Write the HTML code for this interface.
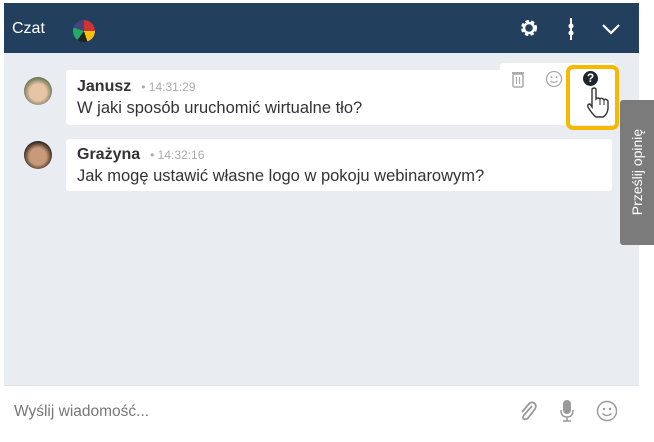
<!DOCTYPE html>
<html><head><meta charset="utf-8"><style>
body{margin:0;width:654px;height:442px;background:#fff;font-family:"Liberation Sans",sans-serif;position:relative;overflow:hidden}
.panel{position:absolute;left:4px;top:3px;width:635px;height:434px;background:#e9ecf1}
.hdr{position:absolute;left:0;top:0;width:635px;height:50px;background:#22405e;color:#fff}
.msg{position:absolute;background:#fff;border-radius:3px}
.name{font-weight:bold;font-size:16px;color:#333}
.time{font-size:12px;color:#aaa;margin-left:10px}
.txt{font-size:16.5px;color:#333;margin-top:3px}
.av{position:absolute;width:28px;height:28px;border-radius:50%}
</style></head><body>
<div class="panel">
 <div class="hdr">
  <div style="position:absolute;left:8px;top:17px;font-size:16px">Czat</div>
  <div style="position:absolute;left:69px;top:17px;width:22px;height:22px;border-radius:50%;background:conic-gradient(#c33 0 25%,#f4c20d 0 45%,#222 0 60%,#2a6 0 80%,#447 0 100%)"></div>
  <svg style="position:absolute;left:516px;top:16px" width="18" height="18" viewBox="0 0 18 18"><circle cx="9" cy="9" r="6" fill="none" stroke="#fff" stroke-width="4" stroke-dasharray="3 2"/><circle cx="9" cy="9" r="5" fill="none" stroke="#fff" stroke-width="2.5"/></svg>
  <svg style="position:absolute;left:563px;top:15px" width="8" height="22"><rect x="3" y="0" width="2" height="22" fill="#fff"/><circle cx="4" cy="8" r="2.5" fill="#fff"/><circle cx="4" cy="15" r="2.5" fill="#fff"/></svg>
  <svg style="position:absolute;left:598px;top:21px" width="18" height="11"><path d="M1 1 L9 9 L17 1" fill="none" stroke="#fff" stroke-width="2.2"/></svg>
 </div>
 <div class="av" style="left:20px;top:74px;background:radial-gradient(circle at 50% 55%,#e8c4a6 40%,#5a6b4a 75%)"></div>
 <div class="msg" style="left:62px;top:67px;width:546px;height:55px">
  <div style="position:absolute;left:11px;top:8px"><span class="name">Janusz</span><span class="time">• 14:31:29</span><div class="txt">W jaki sposób uruchomić wirtualne tło?</div></div>
 </div>
 <div style="position:absolute;left:496px;top:60px;width:116px;height:62px;background:#fff;border-radius:3px"></div>
 <svg style="position:absolute;left:507px;top:67px" width="14" height="18"><rect x="2" y="4" width="10" height="13" rx="1.5" fill="none" stroke="#aaa" stroke-width="1.5"/><rect x="1" y="2" width="12" height="2" fill="#aaa"/><path d="M5.5 7v7M8.5 7v7" stroke="#aaa" stroke-width="1.2"/></svg>
 <svg style="position:absolute;left:541px;top:67px" width="18" height="18"><circle cx="9" cy="9" r="7.5" fill="none" stroke="#aaa" stroke-width="1.3"/><circle cx="6.5" cy="7" r="1" fill="#aaa"/><circle cx="11.5" cy="7" r="1" fill="#aaa"/><path d="M5.5 11 Q9 14 12.5 11" fill="none" stroke="#aaa" stroke-width="1.2"/></svg>
 <div style="position:absolute;left:562px;top:62px;width:45px;height:57px;border:4px solid #f8b800;border-radius:7px"></div>
 <div style="position:absolute;left:579px;top:68px;width:15px;height:15px;border-radius:50%;background:#1c2530;color:#fff;font-size:12px;font-weight:bold;text-align:center;line-height:15px">?</div>
 <svg style="position:absolute;left:582px;top:84px" width="24" height="32" viewBox="0 0 24 32"><path d="M6 2 Q8 0 10 2 L10 12 Q12 10 14 12 Q16 10 18 13 Q20 11 22 14 L22 22 Q21 28 17 30 L10 30 Q6 27 2 20 Q1 17 4 17 L6 20 Z" fill="#fff" stroke="#333" stroke-width="1.4"/><path d="M14 12v6M18 13v5" stroke="#333" stroke-width="1"/></svg>
 <div class="av" style="left:20px;top:138px;background:radial-gradient(circle at 50% 55%,#c89a7a 40%,#2b2218 72%)"></div>
 <div class="msg" style="left:62px;top:136px;width:546px;height:52px">
  <div style="position:absolute;left:11px;top:7px"><span class="name">Grażyna</span><span class="time">• 14:32:16</span><div class="txt">Jak mogę ustawić własne logo w pokoju webinarowym?</div></div>
 </div>
 <div style="position:absolute;left:0;top:382px;width:635px;height:52px;background:#fff;border-top:1px solid #dde2ea">
  <div style="position:absolute;left:10px;top:17px;font-size:15.5px;color:#777">Wyślij wiadomość...</div>
  <svg style="position:absolute;left:514px;top:14px" width="20" height="22"><path d="M14 6 L6 15 Q4 18 6 19 Q8 20 10 18 L17 9 Q19 5 16 3 Q13 1 10 5 L4 12" fill="none" stroke="#999" stroke-width="1.8"/></svg>
  <svg style="position:absolute;left:556px;top:13px" width="14" height="24"><rect x="3" y="1" width="8" height="14" rx="4" fill="#999"/><path d="M1 11 Q1 18 7 18 Q13 18 13 11M7 18v4M3 22h8" fill="none" stroke="#999" stroke-width="1.5"/></svg>
  <svg style="position:absolute;left:592px;top:14px" width="22" height="22"><circle cx="11" cy="11" r="9.5" fill="none" stroke="#999" stroke-width="1.4"/><circle cx="8" cy="9" r="1.2" fill="#999"/><circle cx="14" cy="9" r="1.2" fill="#999"/><path d="M6.5 13.5 Q11 17.5 15.5 13.5" fill="none" stroke="#999" stroke-width="1.3"/></svg>
 </div>
</div>
<div style="position:absolute;left:620px;top:100px;width:34px;height:145px;background:#7b7b7b;border-radius:3px 0 0 3px">
 <div style="position:absolute;left:17px;top:72px;transform:translate(-50%,-50%) rotate(-90deg);white-space:nowrap;color:#fff;font-size:14px">Prześlij opinię</div>
</div>
</body></html>
